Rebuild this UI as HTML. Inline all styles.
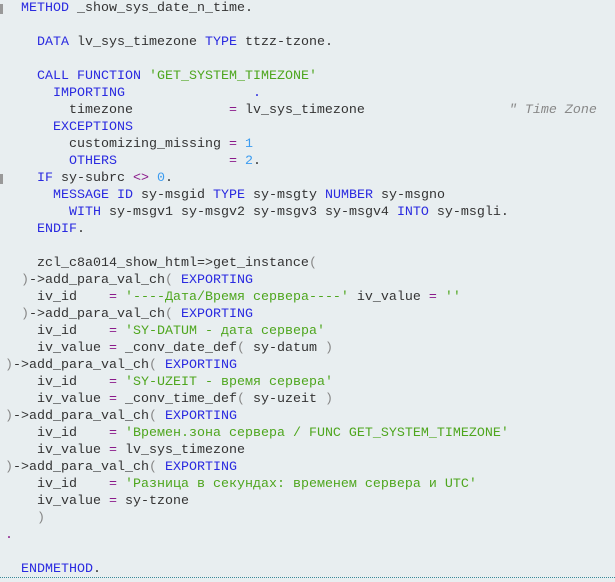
<!DOCTYPE html>
<html><head><meta charset="utf-8"><style>
html,body{margin:0;padding:0;}
body{width:615px;height:582px;background:#e8eef0;position:relative;overflow:hidden;}
pre{margin:0;position:absolute;left:5px;top:0;font-family:"Liberation Mono","DejaVu Sans Mono",monospace;font-size:13.33px;line-height:17px;color:#333;}
.k{color:#2a2ae0}.s{color:#4ea61e}.n{color:#3c9cf0}.o{color:#8a1a8a}.p{color:#888}.c{color:#888;font-style:italic}
.mk{position:absolute;left:0;width:3px;height:10px;background:#999}
.dl{position:absolute;left:0;right:0;top:577px;border-top:1px dotted #3a8a9a}
</style></head><body>
<div class="mk" style="top:4px"></div>
<div class="mk" style="top:174px"></div>
<pre>  <span class="k">METHOD</span> _show_sys_date_n_time.

    <span class="k">DATA</span> lv_sys_timezone <span class="k">TYPE</span> ttzz-tzone.

    <span class="k">CALL FUNCTION</span> <span class="s">'GET_SYSTEM_TIMEZONE'</span>
      <span class="k">IMPORTING</span>                <span class="k">.</span>
        timezone            <span class="o">=</span> lv_sys_timezone                  <span class="c">" Time Zone</span>
      <span class="k">EXCEPTIONS</span>
        customizing_missing <span class="o">=</span> <span class="n">1</span>
        <span class="k">OTHERS</span>              <span class="o">=</span> <span class="n">2</span>.
    <span class="k">IF</span> sy-subrc <span class="o">&lt;&gt;</span> <span class="n">0</span>.
      <span class="k">MESSAGE ID</span> sy-msgid <span class="k">TYPE</span> sy-msgty <span class="k">NUMBER</span> sy-msgno
        <span class="k">WITH</span> sy-msgv1 sy-msgv2 sy-msgv3 sy-msgv4 <span class="k">INTO</span> sy-msgli.
    <span class="k">ENDIF</span>.

    zcl_c8a014_show_html=&gt;get_instance<span class="p">(</span>
  <span class="p">)</span>-&gt;add_para_val_ch<span class="p">(</span> <span class="k">EXPORTING</span>
    iv_id    <span class="o">=</span> <span class="s">'----Дата/Время сервера----'</span> iv_value <span class="o">=</span> <span class="s">''</span>
  <span class="p">)</span>-&gt;add_para_val_ch<span class="p">(</span> <span class="k">EXPORTING</span>
    iv_id    <span class="o">=</span> <span class="s">'SY-DATUM - дата сервера'</span>
    iv_value <span class="o">=</span> _conv_date_def<span class="p">(</span> sy-datum <span class="p">)</span>
<span class="p">)</span>-&gt;add_para_val_ch<span class="p">(</span> <span class="k">EXPORTING</span>
    iv_id    <span class="o">=</span> <span class="s">'SY-UZEIT - время сервера'</span>
    iv_value <span class="o">=</span> _conv_time_def<span class="p">(</span> sy-uzeit <span class="p">)</span>
<span class="p">)</span>-&gt;add_para_val_ch<span class="p">(</span> <span class="k">EXPORTING</span>
    iv_id    <span class="o">=</span> <span class="s">'Времен.зона сервера / FUNC GET_SYSTEM_TIMEZONE'</span>
    iv_value <span class="o">=</span> lv_sys_timezone
<span class="p">)</span>-&gt;add_para_val_ch<span class="p">(</span> <span class="k">EXPORTING</span>
    iv_id    <span class="o">=</span> <span class="s">'Разница в секундах: временем сервера и UTC'</span>
    iv_value <span class="o">=</span> sy-tzone
    <span class="p">)</span>
<span class="o">.</span>

  <span class="k">ENDMETHOD</span>.</pre>
<div class="dl"></div>
</body></html>
